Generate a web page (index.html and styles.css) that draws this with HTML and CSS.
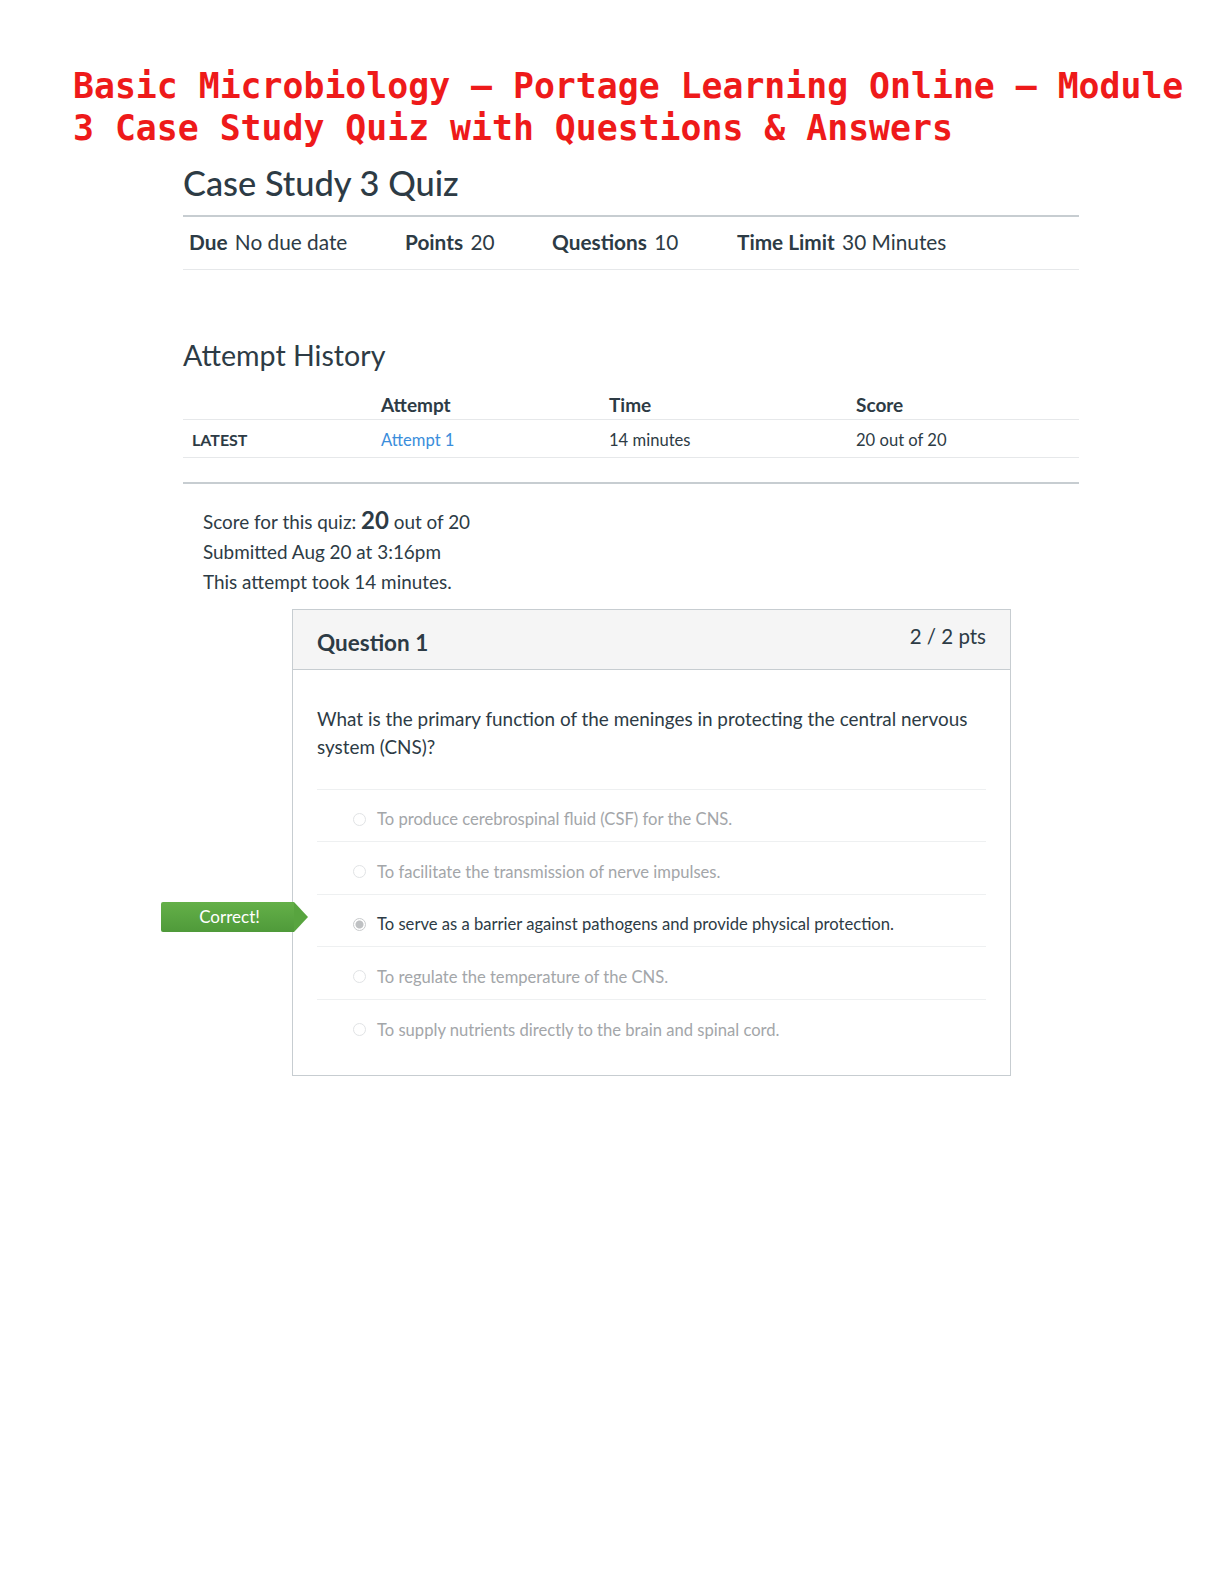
FILE: index.html
```html
<!DOCTYPE html>
<html>
<head>
<meta charset="utf-8">
<link rel="stylesheet" href="styles.css">
</head>
<body>
<h1 class="doc-title">Basic Microbiology – Portage Learning Online – Module 3 Case Study Quiz with Questions &amp; Answers</h1>

<main class="quiz">
  <h2 class="quiz-title">Case Study 3 Quiz</h2>
  <ul class="quiz-info">
    <li class="info-due"><b>Due</b> No due date</li>
    <li class="info-points"><b>Points</b> 20</li>
    <li class="info-questions"><b>Questions</b> 10</li>
    <li class="info-time"><b>Time Limit</b> 30 Minutes</li>
  </ul>

  <h3 class="history-title">Attempt History</h3>
  <table class="history">
    <thead>
      <tr><th class="c1"></th><th class="c2">Attempt</th><th class="c3">Time</th><th class="c4">Score</th></tr>
    </thead>
    <tbody>
      <tr><td class="c1 latest">LATEST</td><td class="c2"><a class="attempt-link">Attempt 1</a></td><td class="c3">14 minutes</td><td class="c4">20 out of 20</td></tr>
    </tbody>
  </table>
  <div class="history-rule"></div>

  <div class="score-summary">
    <p>Score for this quiz: <span class="score-big">20</span> out of 20</p>
    <p>Submitted Aug 20 at 3:16pm</p>
    <p>This attempt took 14 minutes.</p>
  </div>

  <section class="question">
    <header class="q-header">
      <span class="q-name">Question 1</span>
      <span class="q-pts">2 / 2 pts</span>
    </header>
    <div class="q-body">
      <p class="q-text">What is the primary function of the meninges in protecting the central nervous system (CNS)?</p>
      <ul class="answers">
        <li class="answer"><span class="radio"></span>To produce cerebrospinal fluid (CSF) for the CNS.</li>
        <li class="answer"><span class="radio"></span>To facilitate the transmission of nerve impulses.</li>
        <li class="answer selected"><span class="badge">Correct!</span><span class="radio"></span>To serve as a barrier against pathogens and provide physical protection.</li>
        <li class="answer"><span class="radio"></span>To regulate the temperature of the CNS.</li>
        <li class="answer"><span class="radio"></span>To supply nutrients directly to the brain and spinal cord.</li>
      </ul>
    </div>
  </section>
</main>
</body>
</html>
```

FILE: styles.css
```css
* { box-sizing: border-box; }
html, body { margin: 0; padding: 0; background: #fff; }
body { width: 1224px; min-height: 1584px; font-family: Lato, "Open Sans", sans-serif; color: #2d3b45; }

.doc-title {
  margin: 0;
  padding: 65px 0 0 73px;
  width: 1195px;
  font-family: "DejaVu Sans Mono", monospace;
  font-weight: bold;
  font-size: 34.8px;
  line-height: 42px;
  color: #ee1a1a;
}

.quiz { margin: 13px 0 0 183px; width: 896px; }

.quiz-title {
  margin: 0;
  font-size: 34.4px;
  font-weight: 500;
  line-height: 42px;
  padding-bottom: 11px;
  border-bottom: 2px solid #c7cdd1;
  color: #2d3b45;
}

.quiz-info {
  list-style: none;
  margin: 0;
  padding: 0 0 3px 6px;
  height: 53px;
  display: flex;
  align-items: center;
  border-bottom: 1px solid #e6e8ea;
  font-size: 20.8px;
  color: #2d3b45;
}
.quiz-info b { font-weight: 700; margin-right: 2px; }
.info-due { width: 216px; }
.info-points { width: 147px; }
.info-questions { width: 185px; }

.history-title {
  margin: 0;
  padding-top: 67px;
  font-size: 28.6px;
  font-weight: 400;
  line-height: 36px;
  color: #2d3b45;
}

.history { width: 100%; border-collapse: collapse; margin-top: 20px; }
.history th { text-align: left; font-size: 19px; font-weight: 700; height: 26px; padding: 0; border-bottom: 1px solid #e6e8ea; vertical-align: top; line-height: 24px; }
.history td { font-size: 16.6px; height: 38px; padding: 3px 0 0; border-bottom: 1px solid #e6e8ea; vertical-align: middle; }
.history .c1 { width: 198px; }
.history td.c1 { padding-left: 9px; }
.history .c2 { width: 228px; }
.history .c3 { width: 247px; }
.latest { font-weight: 700; font-size: 16px !important; }
.attempt-link { color: #3a8ddb; }
.history-rule { height: 2px; background: #c7cdd1; margin-top: 24px; }

.score-summary { padding: 21px 0 0 20px; font-size: 18.9px; color: #2d3b45; }
.score-summary p { margin: 0; line-height: 30px; }
.score-big { font-size: 24px; font-weight: 700; }

.question {
  margin: 12px 0 0 109px;
  width: 719px;
  border: 1px solid #c7cdd1;
  padding-bottom: 23px;
}
.q-header {
  height: 60px;
  background: #f5f5f5;
  border-bottom: 1px solid #c7cdd1;
  display: flex;
  justify-content: space-between;
  padding: 0 24px;
}
.q-name { font-size: 22.5px; font-weight: 700; line-height: 65px; }
.q-pts { font-size: 20.5px; font-weight: 400; line-height: 53px; }

.q-body { padding: 0 24px; }
.q-text { margin: 0; padding: 35px 0 28px; font-size: 18.9px; line-height: 28px; }

.answers { list-style: none; margin: 0; padding: 0; border-top: 1px solid #eef0f1; }
.answer {
  position: relative;
  height: 52.5px;
  display: flex;
  align-items: center;
  padding: 8px 0 0 36px;
  border-bottom: 1px solid #eef0f1;
  font-size: 16.6px;
  color: #a3a6a9;
}
.answer:last-child { border-bottom: none; }
.answer.selected { color: #2d3b45; }
.radio {
  width: 13px; height: 13px;
  border-radius: 50%;
  border: 1px solid #e1e3e5;
  margin-right: 11px;
  flex: none;
  background: #fff;
}
.selected .radio { border-color: #c9cbcd; background: radial-gradient(circle, #bfc1c3 0 3.5px, #fff 4.5px); }

.badge {
  position: absolute;
  left: -156px;
  top: 7px;
  width: 133px;
  height: 30px;
  padding-left: 4px;
  background: linear-gradient(#64b048, #4f9a3a);
  color: #fff;
  font-size: 17px;
  line-height: 30px;
  text-align: center;
  border-radius: 2px 0 0 2px;
}
.badge::after {
  content: "";
  position: absolute;
  right: -14px;
  top: 0;
  border-top: 15px solid transparent;
  border-bottom: 15px solid transparent;
  border-left: 14px solid #58a43f;
}
```
